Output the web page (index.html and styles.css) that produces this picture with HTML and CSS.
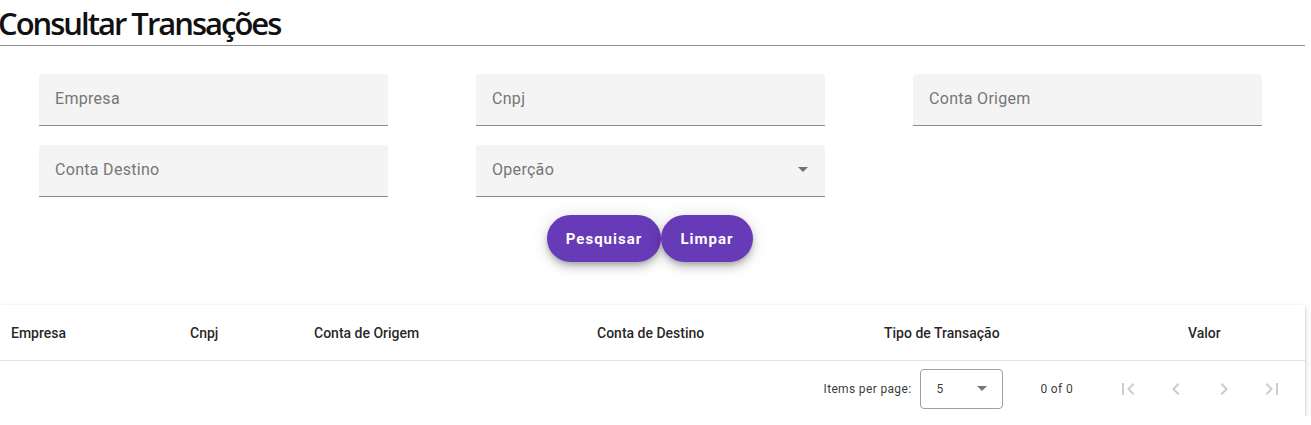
FILE: index.html
```html
<!DOCTYPE html>
<html lang="pt-BR">
<head>
<meta charset="utf-8">
<title>Consultar Transações</title>
<link rel="stylesheet" href="styles.css">
</head>
<body>
<div class="page">
  <h1 class="title">Consultar Transações</h1>

  <form class="filters">
    <div class="field"><span class="label">Empresa</span></div>
    <div class="field"><span class="label">Cnpj</span></div>
    <div class="field"><span class="label">Conta Origem</span></div>
    <div class="field"><span class="label">Conta Destino</span></div>
    <div class="field select"><span class="label">Operção</span><span class="arrow"></span></div>
  </form>

  <div class="actions">
    <button type="button" class="btn">Pesquisar</button>
    <button type="button" class="btn">Limpar</button>
  </div>

  <div class="card">
    <div class="thead">
      <div class="th">Empresa</div>
      <div class="th">Cnpj</div>
      <div class="th">Conta de Origem</div>
      <div class="th">Conta de Destino</div>
      <div class="th">Tipo de Transação</div>
      <div class="th">Valor</div>
    </div>
    <div class="paginator">
      <span class="ipp">Items per page:</span>
      <div class="ps">
        <span>5</span><span class="ps-arrow"></span>
      </div>
      <span class="range">0 of 0</span>
      <div class="navs">
        <span class="nav"><svg viewBox="0 0 24 24" width="24" height="24"><path d="M18.41 16.59L13.82 12l4.59-4.59L17 6l-6 6 6 6zM6 6h2v12H6z"/></svg></span>
        <span class="nav"><svg viewBox="0 0 24 24" width="24" height="24"><path d="M15.41 7.41L14 6l-6 6 6 6 1.41-1.41L10.83 12z"/></svg></span>
        <span class="nav"><svg viewBox="0 0 24 24" width="24" height="24"><path d="M10 6L8.59 7.41 13.17 12l-4.58 4.59L10 18l6-6z"/></svg></span>
        <span class="nav"><svg viewBox="0 0 24 24" width="24" height="24"><path d="M5.59 7.41L10.18 12l-4.59 4.59L7 18l6-6-6-6zM16 6h2v12h-2z"/></svg></span>
      </div>
    </div>
  </div>
</div>
</body>
</html>
```

FILE: styles.css
```css
* { box-sizing: border-box; }
html, body { margin: 0; padding: 0; background: #fff; }
body { font-family: Roboto, "Liberation Sans", sans-serif; color: rgba(0,0,0,0.87); }

.page { width: 1305px; }

.title {
  margin: 0;
  height: 46px;
  padding-top: 3px;
  margin-left: -2px;
  font-family: "Open Sans", "DejaVu Sans", sans-serif;
  font-weight: 600;
  font-size: 31px;
  line-height: 40px;
  letter-spacing: -2px;
  color: #111;
  border-bottom: 1px solid #8f8f8f;
}

.filters {
  margin: 28px 0 0;
  padding: 0 39px;
  display: grid;
  grid-template-columns: repeat(3, 349px);
  column-gap: 88px;
  row-gap: 19px;
}

.field {
  height: 52px;
  background: #f4f4f4;
  border-bottom: 1px solid #8c8c8c;
  border-radius: 4px 4px 0 0;
  display: flex;
  align-items: center;
  padding: 0 16px 3px;
}
.label {
  font-size: 16px;
  color: #767676;
  letter-spacing: 0.3px;
}
.select { justify-content: space-between; }
.arrow {
  width: 0; height: 0;
  border-left: 5px solid transparent;
  border-right: 5px solid transparent;
  border-top: 5px solid #707070;
  margin-right: 1px;
}

.actions {
  margin-top: 18px;
  display: flex;
  justify-content: center;
  padding-right: 5px;
}
.btn {
  height: 47px;
  border: none;
  border-radius: 24px;
  background: #673ab7;
  color: #fff;
  font-family: Roboto, "Liberation Sans", sans-serif;
  font-weight: 700;
  font-size: 15px;
  letter-spacing: 1px;
  padding: 0;
  box-shadow: 0 3px 5px -1px rgba(0,0,0,.2), 0 6px 10px 0 rgba(0,0,0,.14), 0 1px 18px 0 rgba(0,0,0,.12);
}
.btn:first-child { width: 114px; }
.btn:last-child { width: 92px; }

.card {
  margin-top: 43px;
  background: #fff;
  box-shadow: 0 2px 1px -1px rgba(0,0,0,.2), 0 1px 1px 0 rgba(0,0,0,.14), 0 1px 3px 0 rgba(0,0,0,.12), 0 4px 8px rgba(0,0,0,.12);
}
.thead {
  height: 56px;
  display: grid;
  grid-template-columns: 179px 124px 283px 287px 304px 1fr;
  align-items: center;
  padding-left: 11px;
  border-bottom: 1px solid #e0e0e0;
}
.th {
  font-size: 14px;
  font-weight: 500;
  color: rgba(0,0,0,0.87);
}

.paginator {
  height: 55px;
  display: flex;
  align-items: center;
  justify-content: flex-end;
  padding-right: 9px;
  font-size: 12px;
  letter-spacing: 0.35px;
  color: rgba(0,0,0,0.8);
}
.ipp { margin-right: 9px; }
.ps {
  width: 83px;
  height: 40px;
  border: 1px solid #9e9e9e;
  border-radius: 4px;
  display: flex;
  align-items: center;
  justify-content: space-between;
  padding: 0 15px 0 15px;
  font-size: 12px;
}
.ps-arrow {
  width: 0; height: 0;
  border-left: 5px solid transparent;
  border-right: 5px solid transparent;
  border-top: 5px solid #757575;
}
.range { margin: 0 31px 0 37px; }
.navs { display: flex; }
.nav {
  width: 48px; height: 48px;
  display: flex; align-items: center; justify-content: center;
}
.nav svg { fill: rgba(0,0,0,0.2); }
```
